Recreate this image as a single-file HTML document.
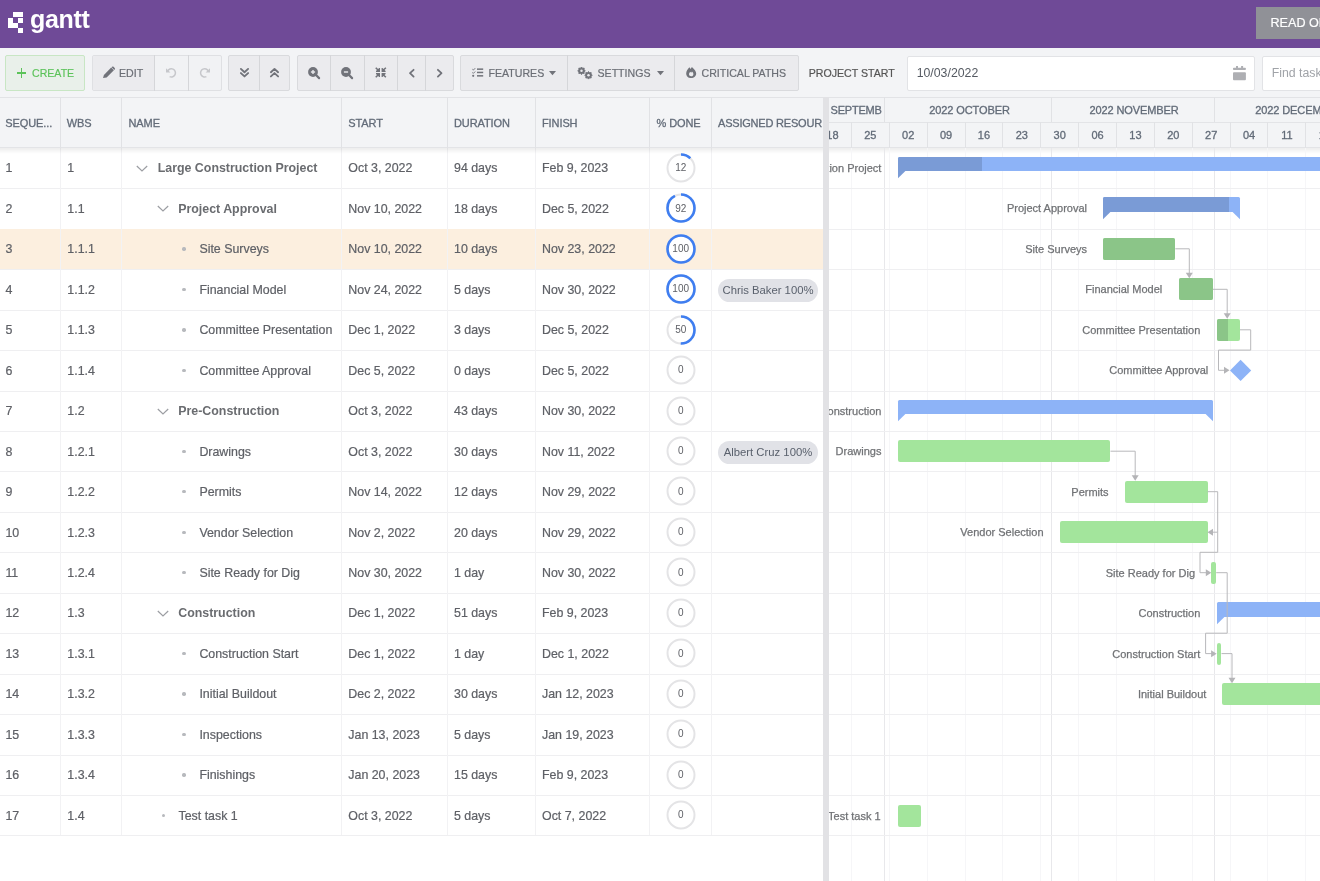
<!DOCTYPE html>
<html><head><meta charset="utf-8"><style>
*{box-sizing:border-box;margin:0;padding:0}
html,body{width:1320px;height:881px;overflow:hidden;background:#fff;font-family:"Liberation Sans", sans-serif;}
.a{position:absolute}
.t{position:absolute;white-space:nowrap;line-height:1}
.g{-webkit-text-stroke:0.2px currentColor}
#root{position:absolute;left:0;top:0;width:1320px;height:881px;overflow:hidden;will-change:transform}
</style></head><body><div id="root">

<div class="a" style="left:0;top:0;width:1320px;height:48px;background:#6f4a97"></div>
<div class="a" style="left:13.1px;top:12.2px;width:10.20px;height:5.30px;background:#fff"></div>
<div class="a" style="left:8px;top:17.5px;width:5.10px;height:5.30px;background:#fff"></div>
<div class="a" style="left:18.2px;top:17.5px;width:5.10px;height:5.30px;background:#fff"></div>
<div class="a" style="left:8px;top:22.8px;width:10.20px;height:5.30px;background:#fff"></div>
<div class="a" style="left:18.2px;top:28.1px;width:5.10px;height:5.30px;background:#fff"></div>
<div class="t" style="left:30px;top:6.5px;font-size:25px;font-weight:700;color:#fff;letter-spacing:-0.3px">gantt</div>
<div class="a" style="left:1256px;top:7.3px;width:80px;height:31.7px;background:#909197"></div>
<div class="t" style="left:1270.5px;top:17.4px;font-size:12.6px;color:#fff;-webkit-text-stroke:0.2px #fff">READ ONLY</div>
<div class="a" style="left:0;top:48px;width:1320px;height:50px;background:#f3f4f6;border-bottom:1px solid #e2e3e6"></div>
<div class="a" style="left:5px;top:55.4px;width:80.00px;height:35.6px;background:#e9f0ea;border:1px solid #c8e6c4;border-radius:2px"></div>
<div class="t" style="left:32px;top:68.3px;font-size:10.6px;color:#5cc35a;-webkit-text-stroke:0.15px #5cc35a">CREATE</div>
<div class="a" style="left:16.8px;top:72.3px;width:9.4px;height:1.6px;background:#5cc35a"></div>
<div class="a" style="left:20.7px;top:68.3px;width:1.6px;height:9.4px;background:#5cc35a"></div>
<div class="a" style="left:91.7px;top:55.4px;width:130.60px;height:35.6px;background:#f1f2f4;border:1px solid #dfe0e3;border-radius:2px"></div>
<div class="a" style="left:92.7px;top:56.4px;width:61.6px;height:33.6px;background:#ebebee;border-radius:2px 0 0 2px"></div>
<div class="a" style="left:153.80px;top:55.4px;width:1px;height:35.6px;background:#d5d6d9"></div>
<div class="a" style="left:187.80px;top:55.4px;width:1px;height:35.6px;background:#d5d6d9"></div>
<div class="t" style="left:119px;top:68.3px;font-size:10.6px;color:#6b6e75;-webkit-text-stroke:0.2px #6b6e75">EDIT</div>
<div class="a" style="left:228.3px;top:55.4px;width:62.10px;height:35.6px;background:#ebebee;border:1px solid #d9dadd;border-radius:2px"></div>
<div class="a" style="left:258.90px;top:55.4px;width:1px;height:35.6px;background:#d5d6d9"></div>
<div class="a" style="left:297.3px;top:55.4px;width:156.40px;height:35.6px;background:#ebebee;border:1px solid #d9dadd;border-radius:2px"></div>
<div class="a" style="left:330.10px;top:55.4px;width:1px;height:35.6px;background:#d5d6d9"></div>
<div class="a" style="left:363.70px;top:55.4px;width:1px;height:35.6px;background:#d5d6d9"></div>
<div class="a" style="left:397.00px;top:55.4px;width:1px;height:35.6px;background:#d5d6d9"></div>
<div class="a" style="left:425.20px;top:55.4px;width:1px;height:35.6px;background:#d5d6d9"></div>
<div class="a" style="left:460.2px;top:55.4px;width:338.60px;height:35.6px;background:#ebebee;border:1px solid #d9dadd;border-radius:2px"></div>
<div class="a" style="left:567.10px;top:55.4px;width:1px;height:35.6px;background:#d5d6d9"></div>
<div class="a" style="left:673.80px;top:55.4px;width:1px;height:35.6px;background:#d5d6d9"></div>
<div class="t" style="left:488.5px;top:68.3px;font-size:10.6px;color:#6b6e75;-webkit-text-stroke:0.2px #6b6e75">FEATURES</div>
<div class="t" style="left:597.5px;top:68.3px;font-size:10.6px;color:#6b6e75;-webkit-text-stroke:0.2px #6b6e75">SETTINGS</div>
<div class="t" style="left:701.5px;top:68.3px;font-size:10.6px;color:#6b6e75;-webkit-text-stroke:0.2px #6b6e75">CRITICAL PATHS</div>
<div class="t" style="left:808.7px;top:68.3px;font-size:10.6px;color:#555;-webkit-text-stroke:0.2px #555">PROJECT START</div>
<div class="a" style="left:906.7px;top:55.7px;width:348.3px;height:35px;background:#fff;border:1px solid #e2e3e6;border-radius:2px"></div>
<div class="t" style="left:916.7px;top:67.3px;font-size:12.3px;color:#555a62">10/03/2022</div>
<div class="a" style="left:1261.7px;top:55.7px;width:80px;height:35px;background:#fff;border:1px solid #e2e3e6;border-radius:2px"></div>
<div class="t" style="left:1271.7px;top:67.3px;font-size:12.3px;color:#a0a3a8">Find tasks</div>
<svg class="a" style="left:102.7px;top:67.1px;overflow:visible" width="12" height="11.2" viewBox="0 0 12 11.2"><path d="M0 11.1 L0.9 7.9 L8.2 0.6 L10.9 3.3 L3.6 10.6 Z" fill="#71737a"/><path d="M9.0 -0.2 Q9.8 -0.9 10.6 -0.2 L11.7 0.9 Q12.4 1.7 11.7 2.5 L11.3 2.9 L8.6 0.2Z" fill="#71737a"/></svg>
<svg class="a" style="left:166.4px;top:68px;overflow:visible" width="10" height="9.6" viewBox="0 0 10 9.6"><path d="M1.6 3.2 A4.1 4.1 0 1 1 3.6 8.6" fill="none" stroke="#c6c7cb" stroke-width="1.5"/><path d="M0 0.2 V4.6 H4.4Z" fill="#c6c7cb"/></svg>
<svg class="a" style="left:200px;top:68px;overflow:visible" width="10" height="9.6" viewBox="0 0 10 9.6"><path d="M8.4 3.2 A4.1 4.1 0 1 0 6.4 8.6" fill="none" stroke="#c6c7cb" stroke-width="1.5"/><path d="M10 0.2 V4.6 H5.6Z" fill="#c6c7cb"/></svg>
<svg class="a" style="left:239.5px;top:68.2px;overflow:visible" width="9" height="9.3" viewBox="0 0 9 9.3"><path d="M0.9 0.9 L4.5 4.2 L8.1 0.9 M0.9 5.1 L4.5 8.4 L8.1 5.1" fill="none" stroke="#71737a" stroke-width="1.9" stroke-linecap="round" stroke-linejoin="round"/></svg>
<svg class="a" style="left:270.2px;top:67.7px;overflow:visible" width="9" height="9.4" viewBox="0 0 9 9.4"><path d="M0.9 8.4 L4.5 5.1 L8.1 8.4 M0.9 4.2 L4.5 0.9 L8.1 4.2" fill="none" stroke="#71737a" stroke-width="1.9" stroke-linecap="round" stroke-linejoin="round"/></svg>
<svg class="a" style="left:308.2px;top:66.8px;overflow:visible" width="12" height="12" viewBox="0 0 12 12"><circle cx="5" cy="5" r="4.9" fill="#71737a"/><path d="M7.8 7.8 L11.1 11.1" stroke="#71737a" stroke-width="2.2" stroke-linecap="round"/><path d="M2.9 5 H7.1" stroke="#ebebee" stroke-width="1.4"/><path d="M5 2.9 V7.1" stroke="#ebebee" stroke-width="1.4"/></svg>
<svg class="a" style="left:341.4px;top:66.5px;overflow:visible" width="12" height="12" viewBox="0 0 12 12"><circle cx="5" cy="5" r="4.9" fill="#71737a"/><path d="M7.8 7.8 L11.1 11.1" stroke="#71737a" stroke-width="2.2" stroke-linecap="round"/><path d="M2.9 5 H7.1" stroke="#ebebee" stroke-width="1.4"/></svg>
<svg class="a" style="left:375px;top:67.1px;overflow:visible" width="11.6" height="11" viewBox="0 0 11.6 11"><g fill="#71737a"><path d="M5 5 L1 5 L1 4.1 L2.0 3.1 L0.2 1.3 L1.3 0.2 L3.1 2.0 L4.1 1 L5 1Z"/><path d="M5 5 L1 5 L1 4.1 L2.0 3.1 L0.2 1.3 L1.3 0.2 L3.1 2.0 L4.1 1 L5 1Z" transform="translate(11.6 0) scale(-1 1)"/><path d="M5 5 L1 5 L1 4.1 L2.0 3.1 L0.2 1.3 L1.3 0.2 L3.1 2.0 L4.1 1 L5 1Z" transform="translate(0 11) scale(1 -1)"/><path d="M5 5 L1 5 L1 4.1 L2.0 3.1 L0.2 1.3 L1.3 0.2 L3.1 2.0 L4.1 1 L5 1Z" transform="translate(11.6 11) scale(-1 -1)"/></g></svg>
<svg class="a" style="left:408.6px;top:68.7px;overflow:visible" width="5.5" height="8.4" viewBox="0 0 5.5 8.4"><path d="M4.6 0.8 L1 4.2 L4.6 7.6" fill="none" stroke="#71737a" stroke-width="1.8" stroke-linecap="round" stroke-linejoin="round"/></svg>
<svg class="a" style="left:437.3px;top:68.7px;overflow:visible" width="5.5" height="8.4" viewBox="0 0 5.5 8.4"><path d="M0.9 0.8 L4.5 4.2 L0.9 7.6" fill="none" stroke="#71737a" stroke-width="1.8" stroke-linecap="round" stroke-linejoin="round"/></svg>
<svg class="a" style="left:471.8px;top:68.2px;overflow:visible" width="11.2" height="9" viewBox="0 0 11.2 9"><g fill="#71737a"><rect x="5" y="0.4" width="6.2" height="1.5"/><rect x="5" y="3.7" width="6.2" height="1.5"/><rect x="5" y="7.1" width="6.2" height="1.5"/><circle cx="1.2" cy="7.8" r="1.1"/></g><path d="M0.4 1.2 L1.3 2.1 L3.2 0.2 M0.4 4.5 L1.3 5.4 L3.2 3.5" fill="none" stroke="#71737a" stroke-width="1"/></svg>
<svg class="a" style="left:549px;top:71.2px;overflow:visible" width="7" height="4.4" viewBox="0 0 7 4.4"><path d="M0 0 H7 L3.5 4.3Z" fill="#71737a"/></svg>
<svg class="a" style="left:656.6px;top:71.2px;overflow:visible" width="7" height="4.4" viewBox="0 0 7 4.4"><path d="M0 0 H7 L3.5 4.3Z" fill="#71737a"/></svg>
<svg class="a" style="left:577px;top:66.5px;overflow:visible" width="16" height="13" viewBox="0 0 16 13"><polygon points="8.30,3.80 7.03,4.85 7.19,6.49 5.55,6.33 4.50,7.60 3.45,6.33 1.81,6.49 1.97,4.85 0.70,3.80 1.97,2.75 1.81,1.11 3.45,1.27 4.50,0.00 5.55,1.27 7.19,1.11 7.03,2.75" fill="#71737a" stroke="#71737a" stroke-width="0.9" stroke-linejoin="round"/><circle cx="4.5" cy="3.8" r="1.25" fill="#ebebee"/><polygon points="15.30,8.30 14.03,9.35 14.19,10.99 12.55,10.83 11.50,12.10 10.45,10.83 8.81,10.99 8.97,9.35 7.70,8.30 8.97,7.25 8.81,5.61 10.45,5.77 11.50,4.50 12.55,5.77 14.19,5.61 14.03,7.25" fill="#71737a" stroke="#71737a" stroke-width="0.9" stroke-linejoin="round"/><circle cx="11.5" cy="8.3" r="1.25" fill="#ebebee"/></svg>
<svg class="a" style="left:685.6px;top:67.3px;overflow:visible" width="10.4" height="11.1" viewBox="0 0 10.4 11.1"><path d="M5.2 11.1 C2.3 11.1 0.2 9.1 0.2 6.4 C0.2 4.2 1.6 2.3 3.4 0.3 L4.6 1.9 L5.9 0 C8.4 2.2 10.2 4.3 10.2 6.6 C10.2 9.1 8.1 11.1 5.2 11.1Z" fill="#71737a"/><path d="M5.2 9.3 C3.9 9.3 3 8.5 3 7.3 C3 6.3 3.6 5.5 4.3 4.8 L5.1 5.8 L6 4.6 C7 5.5 7.4 6.4 7.4 7.2 C7.4 8.5 6.5 9.3 5.2 9.3Z" fill="#ebebee"/></svg>
<svg class="a" style="left:1233px;top:66px;overflow:visible" width="13" height="14.2" viewBox="0 0 13 14.2"><rect x="0" y="1.8" width="12.9" height="2.2" rx="0.8" fill="#aeafb3"/><rect x="0" y="6.3" width="12.9" height="7.9" rx="0.9" fill="#aeafb3"/><rect x="3" y="0" width="2" height="3" fill="#aeafb3"/><rect x="8.1" y="0" width="2" height="3" fill="#aeafb3"/></svg>
<div class="a" style="left:0;top:98px;width:823.3px;height:49.80px;background:#f3f4f6;border-bottom:1px solid #e3e4e7"></div>
<div class="a" style="left:60.00px;top:97px;width:1px;height:50.80px;background:#e1e2e5"></div>
<div class="a" style="left:121.00px;top:97px;width:1px;height:50.80px;background:#e1e2e5"></div>
<div class="a" style="left:341.00px;top:97px;width:1px;height:50.80px;background:#e1e2e5"></div>
<div class="a" style="left:447.00px;top:97px;width:1px;height:50.80px;background:#e1e2e5"></div>
<div class="a" style="left:535.00px;top:97px;width:1px;height:50.80px;background:#e1e2e5"></div>
<div class="a" style="left:649.00px;top:97px;width:1px;height:50.80px;background:#e1e2e5"></div>
<div class="a" style="left:711.00px;top:97px;width:1px;height:50.80px;background:#e1e2e5"></div>
<div class="a" style="left:0px;top:97px;width:60.00px;height:50px;overflow:hidden"><div class="t" style="left:5.30px;top:21px;font-size:11px;-webkit-text-stroke:0.3px #626b78;color:#626b78;letter-spacing:-0.1px">SEQUE...</div></div>
<div class="a" style="left:60.5px;top:97px;width:60.50px;height:50px;overflow:hidden"><div class="t" style="left:6.20px;top:21px;font-size:11px;-webkit-text-stroke:0.3px #626b78;color:#626b78;letter-spacing:-0.1px">WBS</div></div>
<div class="a" style="left:121.5px;top:97px;width:219.50px;height:50px;overflow:hidden"><div class="t" style="left:7.00px;top:21px;font-size:11px;-webkit-text-stroke:0.3px #626b78;color:#626b78;letter-spacing:-0.1px">NAME</div></div>
<div class="a" style="left:341.5px;top:97px;width:105.50px;height:50px;overflow:hidden"><div class="t" style="left:6.80px;top:21px;font-size:11px;-webkit-text-stroke:0.3px #626b78;color:#626b78;letter-spacing:-0.1px">START</div></div>
<div class="a" style="left:447.5px;top:97px;width:87.50px;height:50px;overflow:hidden"><div class="t" style="left:6.50px;top:21px;font-size:11px;-webkit-text-stroke:0.3px #626b78;color:#626b78;letter-spacing:-0.1px">DURATION</div></div>
<div class="a" style="left:535.5px;top:97px;width:113.50px;height:50px;overflow:hidden"><div class="t" style="left:6.50px;top:21px;font-size:11px;-webkit-text-stroke:0.3px #626b78;color:#626b78;letter-spacing:-0.1px">FINISH</div></div>
<div class="a" style="left:649.5px;top:97px;width:61.50px;height:50px;overflow:hidden"><div class="t" style="left:7.00px;top:21px;font-size:11px;-webkit-text-stroke:0.3px #626b78;color:#626b78;letter-spacing:-0.1px">% DONE</div></div>
<div class="a" style="left:711.5px;top:97px;width:111.50px;height:50px;overflow:hidden"><div class="t" style="left:6.50px;top:21px;font-size:11px;-webkit-text-stroke:0.3px #626b78;color:#626b78;letter-spacing:-0.2px">ASSIGNED RESOUR</div></div>
<div class="a" style="left:0;top:147.80px;width:823.3px;height:40.45px;background:#fff"></div>
<div class="a" style="left:0;top:188.25px;width:823.3px;height:40.45px;background:#fff"></div>
<div class="a" style="left:0;top:228.70px;width:823.3px;height:40.45px;background:#fff"></div>
<div class="a" style="left:0;top:269.15px;width:823.3px;height:40.45px;background:#fff"></div>
<div class="a" style="left:0;top:309.60px;width:823.3px;height:40.45px;background:#fff"></div>
<div class="a" style="left:0;top:350.05px;width:823.3px;height:40.45px;background:#fff"></div>
<div class="a" style="left:0;top:390.50px;width:823.3px;height:40.45px;background:#fff"></div>
<div class="a" style="left:0;top:430.95px;width:823.3px;height:40.45px;background:#fff"></div>
<div class="a" style="left:0;top:471.40px;width:823.3px;height:40.45px;background:#fff"></div>
<div class="a" style="left:0;top:511.85px;width:823.3px;height:40.45px;background:#fff"></div>
<div class="a" style="left:0;top:552.30px;width:823.3px;height:40.45px;background:#fff"></div>
<div class="a" style="left:0;top:592.75px;width:823.3px;height:40.45px;background:#fff"></div>
<div class="a" style="left:0;top:633.20px;width:823.3px;height:40.45px;background:#fff"></div>
<div class="a" style="left:0;top:673.65px;width:823.3px;height:40.45px;background:#fff"></div>
<div class="a" style="left:0;top:714.10px;width:823.3px;height:40.45px;background:#fff"></div>
<div class="a" style="left:0;top:754.55px;width:823.3px;height:40.45px;background:#fff"></div>
<div class="a" style="left:0;top:795.00px;width:823.3px;height:40.45px;background:#fff"></div>
<div class="a" style="left:0;top:188.25px;width:823.3px;height:1px;background:#efeff1"></div>
<div class="a" style="left:0;top:228.70px;width:823.3px;height:1px;background:#efeff1"></div>
<div class="a" style="left:0;top:269.15px;width:823.3px;height:1px;background:#efeff1"></div>
<div class="a" style="left:0;top:309.60px;width:823.3px;height:1px;background:#efeff1"></div>
<div class="a" style="left:0;top:350.05px;width:823.3px;height:1px;background:#efeff1"></div>
<div class="a" style="left:0;top:390.50px;width:823.3px;height:1px;background:#efeff1"></div>
<div class="a" style="left:0;top:430.95px;width:823.3px;height:1px;background:#efeff1"></div>
<div class="a" style="left:0;top:471.40px;width:823.3px;height:1px;background:#efeff1"></div>
<div class="a" style="left:0;top:511.85px;width:823.3px;height:1px;background:#efeff1"></div>
<div class="a" style="left:0;top:552.30px;width:823.3px;height:1px;background:#efeff1"></div>
<div class="a" style="left:0;top:592.75px;width:823.3px;height:1px;background:#efeff1"></div>
<div class="a" style="left:0;top:633.20px;width:823.3px;height:1px;background:#efeff1"></div>
<div class="a" style="left:0;top:673.65px;width:823.3px;height:1px;background:#efeff1"></div>
<div class="a" style="left:0;top:714.10px;width:823.3px;height:1px;background:#efeff1"></div>
<div class="a" style="left:0;top:754.55px;width:823.3px;height:1px;background:#efeff1"></div>
<div class="a" style="left:0;top:795.00px;width:823.3px;height:1px;background:#efeff1"></div>
<div class="a" style="left:0;top:835.45px;width:823.3px;height:1px;background:#efeff1"></div>
<div class="a" style="left:0;top:229.20px;width:823.3px;height:39.95px;background:#fcefdf"></div>
<div class="a" style="left:60.00px;top:147.8px;width:1px;height:687.65px;background:#f2f2f4"></div>
<div class="a" style="left:121.00px;top:147.8px;width:1px;height:687.65px;background:#f2f2f4"></div>
<div class="a" style="left:341.00px;top:147.8px;width:1px;height:687.65px;background:#f2f2f4"></div>
<div class="a" style="left:447.00px;top:147.8px;width:1px;height:687.65px;background:#f2f2f4"></div>
<div class="a" style="left:535.00px;top:147.8px;width:1px;height:687.65px;background:#f2f2f4"></div>
<div class="a" style="left:649.00px;top:147.8px;width:1px;height:687.65px;background:#f2f2f4"></div>
<div class="a" style="left:711.00px;top:147.8px;width:1px;height:687.65px;background:#f2f2f4"></div>
<div class="t g" style="left:5.4px;top:162.10px;font-size:12.4px;color:#5e6066">1</div>
<div class="t g" style="left:67.3px;top:162.10px;font-size:12.4px;color:#5e6066">1</div>
<svg class="a" style="left:136.00px;top:164.80px" width="12" height="8" viewBox="0 0 12 8"><path d="M0.8 1.0 L6 6.0 L11.2 1.0" fill="none" stroke="#9c9ea3" stroke-width="1.2"/></svg>
<div class="t" style="left:157.70px;top:162.10px;font-size:12.4px;font-weight:700;color:#6a6c70">Large Construction Project</div>
<div class="t g" style="left:348.3px;top:162.10px;font-size:12.4px;color:#5e6066">Oct 3, 2022</div>
<div class="t g" style="left:454px;top:162.10px;font-size:12.4px;color:#5e6066">94 days</div>
<div class="t g" style="left:542px;top:162.10px;font-size:12.4px;color:#5e6066">Feb 9, 2023</div>
<svg class="a" style="left:665.70px;top:152.83px" width="30" height="30" viewBox="0 0 30 30"><circle cx="15" cy="15" r="13.5" fill="#fff" stroke="#e4e4e6" stroke-width="2"/><circle cx="15" cy="15" r="13.5" fill="none" stroke="#3f7ef0" stroke-width="2.6" stroke-dasharray="10.18 84.82" transform="rotate(-90 15 15)"/></svg>
<div class="t" style="left:665.70px;width:30px;text-align:center;top:163.13px;font-size:10px;color:#5e6066">12</div>
<div class="t g" style="left:5.4px;top:202.59px;font-size:12.4px;color:#5e6066">2</div>
<div class="t g" style="left:67.3px;top:202.59px;font-size:12.4px;color:#5e6066">1.1</div>
<svg class="a" style="left:156.50px;top:205.25px" width="12" height="8" viewBox="0 0 12 8"><path d="M0.8 1.0 L6 6.0 L11.2 1.0" fill="none" stroke="#9c9ea3" stroke-width="1.2"/></svg>
<div class="t" style="left:178.20px;top:202.59px;font-size:12.4px;font-weight:700;color:#6a6c70">Project Approval</div>
<div class="t g" style="left:348.3px;top:202.59px;font-size:12.4px;color:#5e6066">Nov 10, 2022</div>
<div class="t g" style="left:454px;top:202.59px;font-size:12.4px;color:#5e6066">18 days</div>
<div class="t g" style="left:542px;top:202.59px;font-size:12.4px;color:#5e6066">Dec 5, 2022</div>
<svg class="a" style="left:665.70px;top:193.28px" width="30" height="30" viewBox="0 0 30 30"><circle cx="15" cy="15" r="13.5" fill="#fff" stroke="#e4e4e6" stroke-width="2"/><circle cx="15" cy="15" r="13.5" fill="none" stroke="#3f7ef0" stroke-width="2.6" stroke-dasharray="78.04 84.82" transform="rotate(-90 15 15)"/></svg>
<div class="t" style="left:665.70px;width:30px;text-align:center;top:203.58px;font-size:10px;color:#5e6066">92</div>
<div class="t g" style="left:5.4px;top:243.08px;font-size:12.4px;color:#5e6066">3</div>
<div class="t g" style="left:67.3px;top:243.08px;font-size:12.4px;color:#5e6066">1.1.1</div>
<div class="a" style="left:182.40px;top:247.40px;width:3.4px;height:3.4px;border-radius:50%;background:#b7b9bd"></div>
<div class="t g" style="left:199.40px;top:243.08px;font-size:12.4px;color:#5e6066">Site Surveys</div>
<div class="t g" style="left:348.3px;top:243.08px;font-size:12.4px;color:#5e6066">Nov 10, 2022</div>
<div class="t g" style="left:454px;top:243.08px;font-size:12.4px;color:#5e6066">10 days</div>
<div class="t g" style="left:542px;top:243.08px;font-size:12.4px;color:#5e6066">Nov 23, 2022</div>
<svg class="a" style="left:665.70px;top:233.73px" width="30" height="30" viewBox="0 0 30 30"><circle cx="15" cy="15" r="13.5" fill="#fff" stroke="#e4e4e6" stroke-width="2"/><circle cx="15" cy="15" r="13.5" fill="none" stroke="#3f7ef0" stroke-width="2.6" stroke-dasharray="84.82 84.82" transform="rotate(-90 15 15)"/></svg>
<div class="t" style="left:665.70px;width:30px;text-align:center;top:244.03px;font-size:10px;color:#5e6066">100</div>
<div class="t g" style="left:5.4px;top:283.57px;font-size:12.4px;color:#5e6066">4</div>
<div class="t g" style="left:67.3px;top:283.57px;font-size:12.4px;color:#5e6066">1.1.2</div>
<div class="a" style="left:182.40px;top:287.85px;width:3.4px;height:3.4px;border-radius:50%;background:#b7b9bd"></div>
<div class="t g" style="left:199.40px;top:283.57px;font-size:12.4px;color:#5e6066">Financial Model</div>
<div class="t g" style="left:348.3px;top:283.57px;font-size:12.4px;color:#5e6066">Nov 24, 2022</div>
<div class="t g" style="left:454px;top:283.57px;font-size:12.4px;color:#5e6066">5 days</div>
<div class="t g" style="left:542px;top:283.57px;font-size:12.4px;color:#5e6066">Nov 30, 2022</div>
<svg class="a" style="left:665.70px;top:274.18px" width="30" height="30" viewBox="0 0 30 30"><circle cx="15" cy="15" r="13.5" fill="#fff" stroke="#e4e4e6" stroke-width="2"/><circle cx="15" cy="15" r="13.5" fill="none" stroke="#3f7ef0" stroke-width="2.6" stroke-dasharray="84.82 84.82" transform="rotate(-90 15 15)"/></svg>
<div class="t" style="left:665.70px;width:30px;text-align:center;top:284.48px;font-size:10px;color:#5e6066">100</div>
<div class="a" style="left:717.8px;top:278.75px;width:100.4px;height:23px;border-radius:11.5px;background:#e1e2e7"></div>
<div class="t" style="left:717.8px;width:100.4px;text-align:center;top:284.75px;font-size:11.3px;color:#5a616d">Chris Baker 100%</div>
<div class="t g" style="left:5.4px;top:324.06px;font-size:12.4px;color:#5e6066">5</div>
<div class="t g" style="left:67.3px;top:324.06px;font-size:12.4px;color:#5e6066">1.1.3</div>
<div class="a" style="left:182.40px;top:328.30px;width:3.4px;height:3.4px;border-radius:50%;background:#b7b9bd"></div>
<div class="t g" style="left:199.40px;top:324.06px;font-size:12.4px;color:#5e6066">Committee Presentation</div>
<div class="t g" style="left:348.3px;top:324.06px;font-size:12.4px;color:#5e6066">Dec 1, 2022</div>
<div class="t g" style="left:454px;top:324.06px;font-size:12.4px;color:#5e6066">3 days</div>
<div class="t g" style="left:542px;top:324.06px;font-size:12.4px;color:#5e6066">Dec 5, 2022</div>
<svg class="a" style="left:665.70px;top:314.63px" width="30" height="30" viewBox="0 0 30 30"><circle cx="15" cy="15" r="13.5" fill="#fff" stroke="#e4e4e6" stroke-width="2"/><circle cx="15" cy="15" r="13.5" fill="none" stroke="#3f7ef0" stroke-width="2.6" stroke-dasharray="42.41 84.82" transform="rotate(-90 15 15)"/></svg>
<div class="t" style="left:665.70px;width:30px;text-align:center;top:324.93px;font-size:10px;color:#5e6066">50</div>
<div class="t g" style="left:5.4px;top:364.55px;font-size:12.4px;color:#5e6066">6</div>
<div class="t g" style="left:67.3px;top:364.55px;font-size:12.4px;color:#5e6066">1.1.4</div>
<div class="a" style="left:182.40px;top:368.75px;width:3.4px;height:3.4px;border-radius:50%;background:#b7b9bd"></div>
<div class="t g" style="left:199.40px;top:364.55px;font-size:12.4px;color:#5e6066">Committee Approval</div>
<div class="t g" style="left:348.3px;top:364.55px;font-size:12.4px;color:#5e6066">Dec 5, 2022</div>
<div class="t g" style="left:454px;top:364.55px;font-size:12.4px;color:#5e6066">0 days</div>
<div class="t g" style="left:542px;top:364.55px;font-size:12.4px;color:#5e6066">Dec 5, 2022</div>
<svg class="a" style="left:665.70px;top:355.08px" width="30" height="30" viewBox="0 0 30 30"><circle cx="15" cy="15" r="13.5" fill="#fff" stroke="#e4e4e6" stroke-width="2"/></svg>
<div class="t" style="left:665.70px;width:30px;text-align:center;top:365.38px;font-size:10px;color:#5e6066">0</div>
<div class="t g" style="left:5.4px;top:405.04px;font-size:12.4px;color:#5e6066">7</div>
<div class="t g" style="left:67.3px;top:405.04px;font-size:12.4px;color:#5e6066">1.2</div>
<svg class="a" style="left:156.50px;top:407.50px" width="12" height="8" viewBox="0 0 12 8"><path d="M0.8 1.0 L6 6.0 L11.2 1.0" fill="none" stroke="#9c9ea3" stroke-width="1.2"/></svg>
<div class="t" style="left:178.20px;top:405.04px;font-size:12.4px;font-weight:700;color:#6a6c70">Pre-Construction</div>
<div class="t g" style="left:348.3px;top:405.04px;font-size:12.4px;color:#5e6066">Oct 3, 2022</div>
<div class="t g" style="left:454px;top:405.04px;font-size:12.4px;color:#5e6066">43 days</div>
<div class="t g" style="left:542px;top:405.04px;font-size:12.4px;color:#5e6066">Nov 30, 2022</div>
<svg class="a" style="left:665.70px;top:395.53px" width="30" height="30" viewBox="0 0 30 30"><circle cx="15" cy="15" r="13.5" fill="#fff" stroke="#e4e4e6" stroke-width="2"/></svg>
<div class="t" style="left:665.70px;width:30px;text-align:center;top:405.83px;font-size:10px;color:#5e6066">0</div>
<div class="t g" style="left:5.4px;top:445.53px;font-size:12.4px;color:#5e6066">8</div>
<div class="t g" style="left:67.3px;top:445.53px;font-size:12.4px;color:#5e6066">1.2.1</div>
<div class="a" style="left:182.40px;top:449.65px;width:3.4px;height:3.4px;border-radius:50%;background:#b7b9bd"></div>
<div class="t g" style="left:199.40px;top:445.53px;font-size:12.4px;color:#5e6066">Drawings</div>
<div class="t g" style="left:348.3px;top:445.53px;font-size:12.4px;color:#5e6066">Oct 3, 2022</div>
<div class="t g" style="left:454px;top:445.53px;font-size:12.4px;color:#5e6066">30 days</div>
<div class="t g" style="left:542px;top:445.53px;font-size:12.4px;color:#5e6066">Nov 11, 2022</div>
<svg class="a" style="left:665.70px;top:435.98px" width="30" height="30" viewBox="0 0 30 30"><circle cx="15" cy="15" r="13.5" fill="#fff" stroke="#e4e4e6" stroke-width="2"/></svg>
<div class="t" style="left:665.70px;width:30px;text-align:center;top:446.28px;font-size:10px;color:#5e6066">0</div>
<div class="a" style="left:717.8px;top:440.55px;width:100.4px;height:23px;border-radius:11.5px;background:#e1e2e7"></div>
<div class="t" style="left:717.8px;width:100.4px;text-align:center;top:446.55px;font-size:11.3px;color:#5a616d">Albert Cruz 100%</div>
<div class="t g" style="left:5.4px;top:486.02px;font-size:12.4px;color:#5e6066">9</div>
<div class="t g" style="left:67.3px;top:486.02px;font-size:12.4px;color:#5e6066">1.2.2</div>
<div class="a" style="left:182.40px;top:490.10px;width:3.4px;height:3.4px;border-radius:50%;background:#b7b9bd"></div>
<div class="t g" style="left:199.40px;top:486.02px;font-size:12.4px;color:#5e6066">Permits</div>
<div class="t g" style="left:348.3px;top:486.02px;font-size:12.4px;color:#5e6066">Nov 14, 2022</div>
<div class="t g" style="left:454px;top:486.02px;font-size:12.4px;color:#5e6066">12 days</div>
<div class="t g" style="left:542px;top:486.02px;font-size:12.4px;color:#5e6066">Nov 29, 2022</div>
<svg class="a" style="left:665.70px;top:476.43px" width="30" height="30" viewBox="0 0 30 30"><circle cx="15" cy="15" r="13.5" fill="#fff" stroke="#e4e4e6" stroke-width="2"/></svg>
<div class="t" style="left:665.70px;width:30px;text-align:center;top:486.73px;font-size:10px;color:#5e6066">0</div>
<div class="t g" style="left:5.4px;top:526.51px;font-size:12.4px;color:#5e6066">10</div>
<div class="t g" style="left:67.3px;top:526.51px;font-size:12.4px;color:#5e6066">1.2.3</div>
<div class="a" style="left:182.40px;top:530.55px;width:3.4px;height:3.4px;border-radius:50%;background:#b7b9bd"></div>
<div class="t g" style="left:199.40px;top:526.51px;font-size:12.4px;color:#5e6066">Vendor Selection</div>
<div class="t g" style="left:348.3px;top:526.51px;font-size:12.4px;color:#5e6066">Nov 2, 2022</div>
<div class="t g" style="left:454px;top:526.51px;font-size:12.4px;color:#5e6066">20 days</div>
<div class="t g" style="left:542px;top:526.51px;font-size:12.4px;color:#5e6066">Nov 29, 2022</div>
<svg class="a" style="left:665.70px;top:516.88px" width="30" height="30" viewBox="0 0 30 30"><circle cx="15" cy="15" r="13.5" fill="#fff" stroke="#e4e4e6" stroke-width="2"/></svg>
<div class="t" style="left:665.70px;width:30px;text-align:center;top:527.17px;font-size:10px;color:#5e6066">0</div>
<div class="t g" style="left:5.4px;top:567.00px;font-size:12.4px;color:#5e6066">11</div>
<div class="t g" style="left:67.3px;top:567.00px;font-size:12.4px;color:#5e6066">1.2.4</div>
<div class="a" style="left:182.40px;top:571.00px;width:3.4px;height:3.4px;border-radius:50%;background:#b7b9bd"></div>
<div class="t g" style="left:199.40px;top:567.00px;font-size:12.4px;color:#5e6066">Site Ready for Dig</div>
<div class="t g" style="left:348.3px;top:567.00px;font-size:12.4px;color:#5e6066">Nov 30, 2022</div>
<div class="t g" style="left:454px;top:567.00px;font-size:12.4px;color:#5e6066">1 day</div>
<div class="t g" style="left:542px;top:567.00px;font-size:12.4px;color:#5e6066">Nov 30, 2022</div>
<svg class="a" style="left:665.70px;top:557.32px" width="30" height="30" viewBox="0 0 30 30"><circle cx="15" cy="15" r="13.5" fill="#fff" stroke="#e4e4e6" stroke-width="2"/></svg>
<div class="t" style="left:665.70px;width:30px;text-align:center;top:567.62px;font-size:10px;color:#5e6066">0</div>
<div class="t g" style="left:5.4px;top:607.49px;font-size:12.4px;color:#5e6066">12</div>
<div class="t g" style="left:67.3px;top:607.49px;font-size:12.4px;color:#5e6066">1.3</div>
<svg class="a" style="left:156.50px;top:609.75px" width="12" height="8" viewBox="0 0 12 8"><path d="M0.8 1.0 L6 6.0 L11.2 1.0" fill="none" stroke="#9c9ea3" stroke-width="1.2"/></svg>
<div class="t" style="left:178.20px;top:607.49px;font-size:12.4px;font-weight:700;color:#6a6c70">Construction</div>
<div class="t g" style="left:348.3px;top:607.49px;font-size:12.4px;color:#5e6066">Dec 1, 2022</div>
<div class="t g" style="left:454px;top:607.49px;font-size:12.4px;color:#5e6066">51 days</div>
<div class="t g" style="left:542px;top:607.49px;font-size:12.4px;color:#5e6066">Feb 9, 2023</div>
<svg class="a" style="left:665.70px;top:597.77px" width="30" height="30" viewBox="0 0 30 30"><circle cx="15" cy="15" r="13.5" fill="#fff" stroke="#e4e4e6" stroke-width="2"/></svg>
<div class="t" style="left:665.70px;width:30px;text-align:center;top:608.07px;font-size:10px;color:#5e6066">0</div>
<div class="t g" style="left:5.4px;top:647.98px;font-size:12.4px;color:#5e6066">13</div>
<div class="t g" style="left:67.3px;top:647.98px;font-size:12.4px;color:#5e6066">1.3.1</div>
<div class="a" style="left:182.40px;top:651.90px;width:3.4px;height:3.4px;border-radius:50%;background:#b7b9bd"></div>
<div class="t g" style="left:199.40px;top:647.98px;font-size:12.4px;color:#5e6066">Construction Start</div>
<div class="t g" style="left:348.3px;top:647.98px;font-size:12.4px;color:#5e6066">Dec 1, 2022</div>
<div class="t g" style="left:454px;top:647.98px;font-size:12.4px;color:#5e6066">1 day</div>
<div class="t g" style="left:542px;top:647.98px;font-size:12.4px;color:#5e6066">Dec 1, 2022</div>
<svg class="a" style="left:665.70px;top:638.23px" width="30" height="30" viewBox="0 0 30 30"><circle cx="15" cy="15" r="13.5" fill="#fff" stroke="#e4e4e6" stroke-width="2"/></svg>
<div class="t" style="left:665.70px;width:30px;text-align:center;top:648.52px;font-size:10px;color:#5e6066">0</div>
<div class="t g" style="left:5.4px;top:688.47px;font-size:12.4px;color:#5e6066">14</div>
<div class="t g" style="left:67.3px;top:688.47px;font-size:12.4px;color:#5e6066">1.3.2</div>
<div class="a" style="left:182.40px;top:692.35px;width:3.4px;height:3.4px;border-radius:50%;background:#b7b9bd"></div>
<div class="t g" style="left:199.40px;top:688.47px;font-size:12.4px;color:#5e6066">Initial Buildout</div>
<div class="t g" style="left:348.3px;top:688.47px;font-size:12.4px;color:#5e6066">Dec 2, 2022</div>
<div class="t g" style="left:454px;top:688.47px;font-size:12.4px;color:#5e6066">30 days</div>
<div class="t g" style="left:542px;top:688.47px;font-size:12.4px;color:#5e6066">Jan 12, 2023</div>
<svg class="a" style="left:665.70px;top:678.68px" width="30" height="30" viewBox="0 0 30 30"><circle cx="15" cy="15" r="13.5" fill="#fff" stroke="#e4e4e6" stroke-width="2"/></svg>
<div class="t" style="left:665.70px;width:30px;text-align:center;top:688.98px;font-size:10px;color:#5e6066">0</div>
<div class="t g" style="left:5.4px;top:728.96px;font-size:12.4px;color:#5e6066">15</div>
<div class="t g" style="left:67.3px;top:728.96px;font-size:12.4px;color:#5e6066">1.3.3</div>
<div class="a" style="left:182.40px;top:732.80px;width:3.4px;height:3.4px;border-radius:50%;background:#b7b9bd"></div>
<div class="t g" style="left:199.40px;top:728.96px;font-size:12.4px;color:#5e6066">Inspections</div>
<div class="t g" style="left:348.3px;top:728.96px;font-size:12.4px;color:#5e6066">Jan 13, 2023</div>
<div class="t g" style="left:454px;top:728.96px;font-size:12.4px;color:#5e6066">5 days</div>
<div class="t g" style="left:542px;top:728.96px;font-size:12.4px;color:#5e6066">Jan 19, 2023</div>
<svg class="a" style="left:665.70px;top:719.13px" width="30" height="30" viewBox="0 0 30 30"><circle cx="15" cy="15" r="13.5" fill="#fff" stroke="#e4e4e6" stroke-width="2"/></svg>
<div class="t" style="left:665.70px;width:30px;text-align:center;top:729.43px;font-size:10px;color:#5e6066">0</div>
<div class="t g" style="left:5.4px;top:769.45px;font-size:12.4px;color:#5e6066">16</div>
<div class="t g" style="left:67.3px;top:769.45px;font-size:12.4px;color:#5e6066">1.3.4</div>
<div class="a" style="left:182.40px;top:773.25px;width:3.4px;height:3.4px;border-radius:50%;background:#b7b9bd"></div>
<div class="t g" style="left:199.40px;top:769.45px;font-size:12.4px;color:#5e6066">Finishings</div>
<div class="t g" style="left:348.3px;top:769.45px;font-size:12.4px;color:#5e6066">Jan 20, 2023</div>
<div class="t g" style="left:454px;top:769.45px;font-size:12.4px;color:#5e6066">15 days</div>
<div class="t g" style="left:542px;top:769.45px;font-size:12.4px;color:#5e6066">Feb 9, 2023</div>
<svg class="a" style="left:665.70px;top:759.57px" width="30" height="30" viewBox="0 0 30 30"><circle cx="15" cy="15" r="13.5" fill="#fff" stroke="#e4e4e6" stroke-width="2"/></svg>
<div class="t" style="left:665.70px;width:30px;text-align:center;top:769.87px;font-size:10px;color:#5e6066">0</div>
<div class="t g" style="left:5.4px;top:809.94px;font-size:12.4px;color:#5e6066">17</div>
<div class="t g" style="left:67.3px;top:809.94px;font-size:12.4px;color:#5e6066">1.4</div>
<div class="a" style="left:161.50px;top:813.70px;width:3.4px;height:3.4px;border-radius:50%;background:#b7b9bd"></div>
<div class="t g" style="left:178.50px;top:809.94px;font-size:12.4px;color:#5e6066">Test task 1</div>
<div class="t g" style="left:348.3px;top:809.94px;font-size:12.4px;color:#5e6066">Oct 3, 2022</div>
<div class="t g" style="left:454px;top:809.94px;font-size:12.4px;color:#5e6066">5 days</div>
<div class="t g" style="left:542px;top:809.94px;font-size:12.4px;color:#5e6066">Oct 7, 2022</div>
<svg class="a" style="left:665.70px;top:800.02px" width="30" height="30" viewBox="0 0 30 30"><circle cx="15" cy="15" r="13.5" fill="#fff" stroke="#e4e4e6" stroke-width="2"/></svg>
<div class="t" style="left:665.70px;width:30px;text-align:center;top:810.32px;font-size:10px;color:#5e6066">0</div>
<div class="a" style="left:0;top:147.80px;width:1320px;height:6px;background:linear-gradient(rgba(0,0,0,0.07),rgba(0,0,0,0))"></div>
<div class="a" style="left:823.3px;top:97px;width:5.6px;height:784px;background:#e2e2e5"></div>
<div class="a" style="left:828.9px;top:0;width:491.1px;height:881px;overflow:hidden"><div class="a" style="left:-828.9px;top:0;width:1320px;height:881px">
<div class="a" style="left:828.9px;top:98px;width:491.1px;height:49.80px;background:#f3f4f6;border-bottom:1px solid #e3e4e7"></div>
<div class="a" style="left:828.9px;top:122px;width:491.1px;height:1px;background:#e3e4e7"></div>
<div class="a" style="left:883.80px;top:97px;width:1px;height:25px;background:#e1e2e5"></div>
<div class="a" style="left:1051.00px;top:97px;width:1px;height:25px;background:#e1e2e5"></div>
<div class="a" style="left:1213.80px;top:97px;width:1px;height:25px;background:#e1e2e5"></div>
<div class="a" style="left:850.90px;top:122px;width:1px;height:25.80px;background:#e1e2e5"></div>
<div class="a" style="left:888.77px;top:122px;width:1px;height:25.80px;background:#e1e2e5"></div>
<div class="a" style="left:926.64px;top:122px;width:1px;height:25.80px;background:#e1e2e5"></div>
<div class="a" style="left:964.51px;top:122px;width:1px;height:25.80px;background:#e1e2e5"></div>
<div class="a" style="left:1002.38px;top:122px;width:1px;height:25.80px;background:#e1e2e5"></div>
<div class="a" style="left:1040.25px;top:122px;width:1px;height:25.80px;background:#e1e2e5"></div>
<div class="a" style="left:1078.12px;top:122px;width:1px;height:25.80px;background:#e1e2e5"></div>
<div class="a" style="left:1115.99px;top:122px;width:1px;height:25.80px;background:#e1e2e5"></div>
<div class="a" style="left:1153.86px;top:122px;width:1px;height:25.80px;background:#e1e2e5"></div>
<div class="a" style="left:1191.73px;top:122px;width:1px;height:25.80px;background:#e1e2e5"></div>
<div class="a" style="left:1229.60px;top:122px;width:1px;height:25.80px;background:#e1e2e5"></div>
<div class="a" style="left:1267.47px;top:122px;width:1px;height:25.80px;background:#e1e2e5"></div>
<div class="a" style="left:1305.34px;top:122px;width:1px;height:25.80px;background:#e1e2e5"></div>
<div class="t" style="left:830.5px;top:104.5px;font-size:11px;-webkit-text-stroke:0.3px #626b78;color:#626b78;letter-spacing:-0.2px">SEPTEMB</div>
<div class="t" style="left:909.5px;width:120px;text-align:center;top:104.5px;font-size:11px;-webkit-text-stroke:0.3px #626b78;color:#626b78;letter-spacing:-0.1px">2022 OCTOBER</div>
<div class="t" style="left:1074px;width:120px;text-align:center;top:104.5px;font-size:11px;-webkit-text-stroke:0.3px #626b78;color:#626b78;letter-spacing:-0.1px">2022 NOVEMBER</div>
<div class="t" style="left:1239.5px;width:120px;text-align:center;top:104.5px;font-size:11px;-webkit-text-stroke:0.3px #626b78;color:#626b78;letter-spacing:-0.1px">2022 DECEMBER</div>
<div class="t" style="left:812.47px;width:40px;text-align:center;top:129.5px;font-size:11px;-webkit-text-stroke:0.3px #626b78;color:#626b78">18</div>
<div class="t" style="left:850.34px;width:40px;text-align:center;top:129.5px;font-size:11px;-webkit-text-stroke:0.3px #626b78;color:#626b78">25</div>
<div class="t" style="left:888.21px;width:40px;text-align:center;top:129.5px;font-size:11px;-webkit-text-stroke:0.3px #626b78;color:#626b78">02</div>
<div class="t" style="left:926.08px;width:40px;text-align:center;top:129.5px;font-size:11px;-webkit-text-stroke:0.3px #626b78;color:#626b78">09</div>
<div class="t" style="left:963.95px;width:40px;text-align:center;top:129.5px;font-size:11px;-webkit-text-stroke:0.3px #626b78;color:#626b78">16</div>
<div class="t" style="left:1001.82px;width:40px;text-align:center;top:129.5px;font-size:11px;-webkit-text-stroke:0.3px #626b78;color:#626b78">23</div>
<div class="t" style="left:1039.68px;width:40px;text-align:center;top:129.5px;font-size:11px;-webkit-text-stroke:0.3px #626b78;color:#626b78">30</div>
<div class="t" style="left:1077.56px;width:40px;text-align:center;top:129.5px;font-size:11px;-webkit-text-stroke:0.3px #626b78;color:#626b78">06</div>
<div class="t" style="left:1115.42px;width:40px;text-align:center;top:129.5px;font-size:11px;-webkit-text-stroke:0.3px #626b78;color:#626b78">13</div>
<div class="t" style="left:1153.30px;width:40px;text-align:center;top:129.5px;font-size:11px;-webkit-text-stroke:0.3px #626b78;color:#626b78">20</div>
<div class="t" style="left:1191.16px;width:40px;text-align:center;top:129.5px;font-size:11px;-webkit-text-stroke:0.3px #626b78;color:#626b78">27</div>
<div class="t" style="left:1229.04px;width:40px;text-align:center;top:129.5px;font-size:11px;-webkit-text-stroke:0.3px #626b78;color:#626b78">04</div>
<div class="t" style="left:1266.90px;width:40px;text-align:center;top:129.5px;font-size:11px;-webkit-text-stroke:0.3px #626b78;color:#626b78">11</div>
<div class="t" style="left:1304.78px;width:40px;text-align:center;top:129.5px;font-size:11px;-webkit-text-stroke:0.3px #626b78;color:#626b78">18</div>
<div class="a" style="left:850.90px;top:147.8px;width:1px;height:733.20px;background:#f6f6f8"></div>
<div class="a" style="left:888.77px;top:147.8px;width:1px;height:733.20px;background:#f6f6f8"></div>
<div class="a" style="left:926.64px;top:147.8px;width:1px;height:733.20px;background:#f6f6f8"></div>
<div class="a" style="left:964.51px;top:147.8px;width:1px;height:733.20px;background:#f6f6f8"></div>
<div class="a" style="left:1002.38px;top:147.8px;width:1px;height:733.20px;background:#f6f6f8"></div>
<div class="a" style="left:1040.25px;top:147.8px;width:1px;height:733.20px;background:#f6f6f8"></div>
<div class="a" style="left:1078.12px;top:147.8px;width:1px;height:733.20px;background:#f6f6f8"></div>
<div class="a" style="left:1115.99px;top:147.8px;width:1px;height:733.20px;background:#f6f6f8"></div>
<div class="a" style="left:1153.86px;top:147.8px;width:1px;height:733.20px;background:#f6f6f8"></div>
<div class="a" style="left:1191.73px;top:147.8px;width:1px;height:733.20px;background:#f6f6f8"></div>
<div class="a" style="left:1229.60px;top:147.8px;width:1px;height:733.20px;background:#f6f6f8"></div>
<div class="a" style="left:1267.47px;top:147.8px;width:1px;height:733.20px;background:#f6f6f8"></div>
<div class="a" style="left:1305.34px;top:147.8px;width:1px;height:733.20px;background:#f6f6f8"></div>
<div class="a" style="left:883.80px;top:147.8px;width:1px;height:733.20px;background:#e8e8eb"></div>
<div class="a" style="left:1051.00px;top:147.8px;width:1px;height:733.20px;background:#e8e8eb"></div>
<div class="a" style="left:1213.80px;top:147.8px;width:1px;height:733.20px;background:#e8e8eb"></div>
<div class="a" style="left:828.9px;top:188.25px;width:491.1px;height:1px;background:#efeff1"></div>
<div class="a" style="left:828.9px;top:228.70px;width:491.1px;height:1px;background:#efeff1"></div>
<div class="a" style="left:828.9px;top:269.15px;width:491.1px;height:1px;background:#efeff1"></div>
<div class="a" style="left:828.9px;top:309.60px;width:491.1px;height:1px;background:#efeff1"></div>
<div class="a" style="left:828.9px;top:350.05px;width:491.1px;height:1px;background:#efeff1"></div>
<div class="a" style="left:828.9px;top:390.50px;width:491.1px;height:1px;background:#efeff1"></div>
<div class="a" style="left:828.9px;top:430.95px;width:491.1px;height:1px;background:#efeff1"></div>
<div class="a" style="left:828.9px;top:471.40px;width:491.1px;height:1px;background:#efeff1"></div>
<div class="a" style="left:828.9px;top:511.85px;width:491.1px;height:1px;background:#efeff1"></div>
<div class="a" style="left:828.9px;top:552.30px;width:491.1px;height:1px;background:#efeff1"></div>
<div class="a" style="left:828.9px;top:592.75px;width:491.1px;height:1px;background:#efeff1"></div>
<div class="a" style="left:828.9px;top:633.20px;width:491.1px;height:1px;background:#efeff1"></div>
<div class="a" style="left:828.9px;top:673.65px;width:491.1px;height:1px;background:#efeff1"></div>
<div class="a" style="left:828.9px;top:714.10px;width:491.1px;height:1px;background:#efeff1"></div>
<div class="a" style="left:828.9px;top:754.55px;width:491.1px;height:1px;background:#efeff1"></div>
<div class="a" style="left:828.9px;top:795.00px;width:491.1px;height:1px;background:#efeff1"></div>
<div class="a" style="left:828.9px;top:835.45px;width:491.1px;height:1px;background:#efeff1"></div>
<div class="a" style="left:897.90px;top:156.90px;width:432.10px;height:14.6px;background:#8db3f7;overflow:hidden;border-radius:1.5px 1.5px 0 0"><div class="a" style="left:0;top:0;width:83.90px;height:100%;background:#7a9bd6"></div></div>
<svg class="a" style="left:897.90px;top:171.20px" width="8" height="8" viewBox="0 0 8 8"><path d="M0 0 H7.4 L0 7.2Z" fill="#7a9bd6"/></svg>
<div class="t g" style="-webkit-text-stroke:0.25px currentColor;left:581.40px;width:300px;text-align:right;top:163.00px;font-size:11px;color:#707275">Large Construction Project</div>
<div class="a" style="left:1103.30px;top:197.38px;width:136.40px;height:14.6px;background:#8db3f7;overflow:hidden;border-radius:1.5px 1.5px 0 0"><div class="a" style="left:0;top:0;width:125.70px;height:100%;background:#7a9bd6"></div></div>
<svg class="a" style="left:1103.30px;top:211.68px" width="8" height="8" viewBox="0 0 8 8"><path d="M0 0 H7.4 L0 7.2Z" fill="#7a9bd6"/></svg>
<svg class="a" style="left:1231.70px;top:211.68px" width="8" height="8" viewBox="0 0 8 8"><path d="M0.6 0 H8 V7.2Z" fill="#8db3f7"/></svg>
<div class="t g" style="-webkit-text-stroke:0.25px currentColor;left:787.00px;width:300px;text-align:right;top:203.49px;font-size:11px;color:#707275">Project Approval</div>
<div class="a" style="left:1103.30px;top:237.87px;width:72.00px;height:21.9px;background:#a3e59c;border-radius:2px;overflow:hidden"><div class="a" style="left:0;top:0;width:72.00px;height:100%;background:#8bc588"></div></div>
<div class="t g" style="-webkit-text-stroke:0.25px currentColor;left:787.00px;width:300px;text-align:right;top:243.98px;font-size:11px;color:#707275">Site Surveys</div>
<div class="a" style="left:1178.70px;top:278.36px;width:34.10px;height:21.9px;background:#a3e59c;border-radius:2px;overflow:hidden"><div class="a" style="left:0;top:0;width:34.10px;height:100%;background:#8bc588"></div></div>
<div class="t g" style="-webkit-text-stroke:0.25px currentColor;left:862.30px;width:300px;text-align:right;top:284.47px;font-size:11px;color:#707275">Financial Model</div>
<div class="a" style="left:1216.60px;top:318.84px;width:23.40px;height:21.9px;background:#a3e59c;border-radius:2px;overflow:hidden"><div class="a" style="left:0;top:0;width:11.70px;height:100%;background:#8bc588"></div></div>
<div class="t g" style="-webkit-text-stroke:0.25px currentColor;left:900.30px;width:300px;text-align:right;top:324.96px;font-size:11px;color:#707275">Committee Presentation</div>
<div class="a" style="left:1233.00px;top:362.65px;width:15.2px;height:15.2px;background:#8db3f7;transform:rotate(45deg)"></div>
<div class="t g" style="-webkit-text-stroke:0.25px currentColor;left:908.30px;width:300px;text-align:right;top:365.45px;font-size:11px;color:#707275">Committee Approval</div>
<div class="a" style="left:897.70px;top:399.81px;width:315.10px;height:14.6px;background:#8db3f7;overflow:hidden;border-radius:1.5px 1.5px 0 0"></div>
<svg class="a" style="left:897.70px;top:414.11px" width="8" height="8" viewBox="0 0 8 8"><path d="M0 0 H7.4 L0 7.2Z" fill="#8db3f7"/></svg>
<svg class="a" style="left:1204.80px;top:414.11px" width="8" height="8" viewBox="0 0 8 8"><path d="M0.6 0 H8 V7.2Z" fill="#8db3f7"/></svg>
<div class="t g" style="-webkit-text-stroke:0.25px currentColor;left:581.40px;width:300px;text-align:right;top:405.94px;font-size:11px;color:#707275">Pre-Construction</div>
<div class="a" style="left:897.70px;top:440.30px;width:212.80px;height:21.9px;background:#a3e59c;border-radius:2px;overflow:hidden"></div>
<div class="t g" style="-webkit-text-stroke:0.25px currentColor;left:581.40px;width:300px;text-align:right;top:446.43px;font-size:11px;color:#707275">Drawings</div>
<div class="a" style="left:1125.00px;top:480.78px;width:82.50px;height:21.9px;background:#a3e59c;border-radius:2px;overflow:hidden"></div>
<div class="t g" style="-webkit-text-stroke:0.25px currentColor;left:808.60px;width:300px;text-align:right;top:486.92px;font-size:11px;color:#707275">Permits</div>
<div class="a" style="left:1060.00px;top:521.27px;width:147.50px;height:21.9px;background:#a3e59c;border-radius:2px;overflow:hidden"></div>
<div class="t g" style="-webkit-text-stroke:0.25px currentColor;left:743.50px;width:300px;text-align:right;top:527.41px;font-size:11px;color:#707275">Vendor Selection</div>
<div class="a" style="left:1211.30px;top:561.75px;width:4.90px;height:21.9px;background:#a3e59c;border-radius:2px;overflow:hidden"></div>
<div class="t g" style="-webkit-text-stroke:0.25px currentColor;left:895.00px;width:300px;text-align:right;top:567.90px;font-size:11px;color:#707275">Site Ready for Dig</div>
<div class="a" style="left:1216.60px;top:602.24px;width:113.40px;height:14.6px;background:#8db3f7;overflow:hidden;border-radius:1.5px 1.5px 0 0"></div>
<svg class="a" style="left:1216.60px;top:616.54px" width="8" height="8" viewBox="0 0 8 8"><path d="M0 0 H7.4 L0 7.2Z" fill="#8db3f7"/></svg>
<div class="t g" style="-webkit-text-stroke:0.25px currentColor;left:900.30px;width:300px;text-align:right;top:608.39px;font-size:11px;color:#707275">Construction</div>
<div class="a" style="left:1216.60px;top:642.72px;width:4.90px;height:21.9px;background:#a3e59c;border-radius:2px;overflow:hidden"></div>
<div class="t g" style="-webkit-text-stroke:0.25px currentColor;left:900.30px;width:300px;text-align:right;top:648.88px;font-size:11px;color:#707275">Construction Start</div>
<div class="a" style="left:1222.30px;top:683.21px;width:107.70px;height:21.9px;background:#a3e59c;border-radius:2px;overflow:hidden"></div>
<div class="t g" style="-webkit-text-stroke:0.25px currentColor;left:906.40px;width:300px;text-align:right;top:689.37px;font-size:11px;color:#707275">Initial Buildout</div>
<div class="a" style="left:897.70px;top:804.66px;width:23.40px;height:21.9px;background:#a3e59c;border-radius:2px;overflow:hidden"></div>
<div class="t g" style="-webkit-text-stroke:0.25px currentColor;left:580.60px;width:300px;text-align:right;top:810.84px;font-size:11px;color:#707275">Test task 1</div>
<svg class="a" style="left:0;top:0" width="1320" height="881" viewBox="0 0 1320 881"><path d="M1175.3 248.8 H1189.3 V274.4" fill="none" stroke="#b8b8bb" stroke-width="1"/><path d="M1212.8 289.3 H1227.2 V314.8" fill="none" stroke="#b8b8bb" stroke-width="1"/><path d="M1240 329.8 H1250.7 V350.1 H1218.5 V370.3 H1225.0" fill="none" stroke="#b8b8bb" stroke-width="1"/><path d="M1110.5 451.2 H1135.2 V476.8" fill="none" stroke="#b8b8bb" stroke-width="1"/><path d="M1207.5 491.7 H1217.7 V532.2 H1211.5" fill="none" stroke="#b8b8bb" stroke-width="1"/><path d="M1217.7 532.2 V552.3 H1200 V572.7 H1207.3" fill="none" stroke="#b8b8bb" stroke-width="1"/><path d="M1216.2 572.7 H1227.2 V633.2 H1205.6 V653.6 H1212.6" fill="none" stroke="#b8b8bb" stroke-width="1"/><path d="M1221.5 653.6 H1232 V679.2" fill="none" stroke="#b8b8bb" stroke-width="1"/><polygon points="1185.8,272.8550000000001 1192.8,272.8550000000001 1189.3,278.3550000000001" fill="#b4b4b7"/><polygon points="1223.7,313.34000000000003 1230.7,313.34000000000003 1227.2,318.84000000000003" fill="#b4b4b7"/><polygon points="1224.0,366.75000000000006 1224.0,373.75000000000006 1229.5,370.25000000000006" fill="#b4b4b7"/><polygon points="1131.7,475.28000000000003 1138.7,475.28000000000003 1135.2,480.78000000000003" fill="#b4b4b7"/><polygon points="1213.0,528.69 1213.0,535.69 1207.5,532.19" fill="#b4b4b7"/><polygon points="1205.8,569.175 1205.8,576.175 1211.3,572.675" fill="#b4b4b7"/><polygon points="1211.1,650.145 1211.1,657.145 1216.6,653.645" fill="#b4b4b7"/><polygon points="1228.5,677.7050000000002 1235.5,677.7050000000002 1232,683.2050000000002" fill="#b4b4b7"/></svg>
</div></div>
</div></body></html>
